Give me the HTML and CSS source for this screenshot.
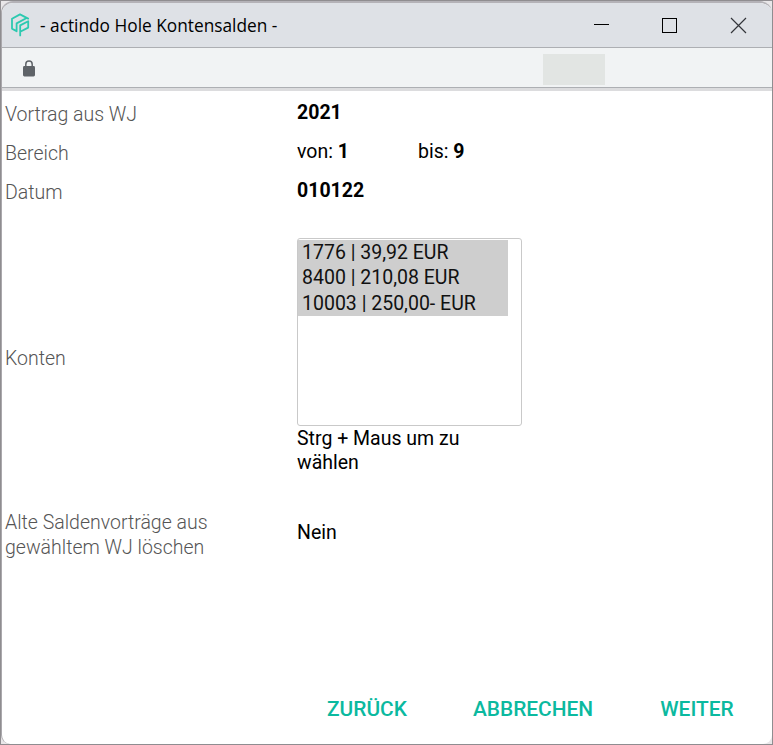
FILE: index.html
```html
<!DOCTYPE html>
<html lang="de">
<head>
<meta charset="utf-8">
<title>- actindo Hole Kontensalden -</title>
<link rel="stylesheet" href="styles.css">
</head>
<body>
<div class="frame">
  <div class="window">
    <header class="titlebar">
      <svg class="logo" width="20" height="24" viewBox="0 0 20 24" fill="none" stroke="#2cc9b0" stroke-width="1.8" stroke-linejoin="round" stroke-linecap="round">
        <path d="M18.2 5.6 L10 1.4 L2 5.8 V15.6 L6.6 18.2 V10.4 L16.2 5.2"/>
        <path d="M10.2 22.4 V12.4 L18.2 8.2 V14.6 L10.2 18.8"/>
      </svg>
      <span class="title">- actindo Hole Kontensalden -</span>
      <svg class="controls" width="155" height="18" viewBox="0 0 155 18" fill="none" stroke="#000">
        <path d="M0 8.5H15"/>
        <rect x="68.5" y="2.5" width="14" height="14"/>
        <path stroke="#33353a" stroke-width="1.2" d="M137 2L152 17M152 2L137 17"/>
      </svg>
    </header>
    <div class="addressbar">
      <svg class="lock" width="12" height="17" viewBox="0 0 12 17">
        <path d="M2.8 7V4.3a3.2 3.2 0 0 1 6.4 0V7" fill="none" stroke="#5f6368" stroke-width="1.5"/>
        <rect y="6" width="12" height="10.4" rx="1.4" fill="#5f6368"/>
      </svg>
      <span class="placeholder"></span>
    </div>
    <main class="content">
      <div class="row"><span class="label">Vortrag aus WJ</span><b class="value">2021</b></div>
      <div class="row"><span class="label">Bereich</span><div class="value range"><span>von: <b>1</b></span><span>bis: <b>9</b></span></div></div>
      <div class="row"><span class="label">Datum</span><b class="value">010122</b></div>
      <div class="row accounts">
        <span class="label">Konten</span>
        <div class="picker">
          <ul class="list">
            <li>1776 | 39,92 EUR</li>
            <li>8400 | 210,08 EUR</li>
            <li>10003 | 250,00- EUR</li>
          </ul>
          <p class="hint">Strg + Maus um zu<br>wählen</p>
        </div>
      </div>
      <div class="row delete"><span class="label">Alte Saldenvorträge aus<br>gewähltem WJ löschen</span><span class="value">Nein</span></div>
      <footer class="actions">
        <button class="back">ZURÜCK</button>
        <button class="cancel">ABBRECHEN</button>
        <button class="next">WEITER</button>
      </footer>
    </main>
  </div>
</div>
</body>
</html>
```
FILE: styles.css
```css
* { box-sizing: border-box; }
body { margin: 0; font-family: Roboto, sans-serif; font-size: 19.5px; color: #000; }
.frame { width: 773px; height: 745px; border: 1px solid #8f8d90; background: #e9e7e9; overflow: hidden; }
.window { height: 743px; border-top: 2px solid #b4b2b7; border-left: 1px solid #aaa8ac; border-radius: 12px 12px 9px 9px; background: #fff; overflow: hidden; display: flex; flex-direction: column; }
.titlebar { height: 45px; flex: none; background: #dee1e6; border-bottom: 1px solid #adafb3; display: flex; align-items: flex-start; padding: 10px 23px 0 8px; }
.logo { flex: none; }
.title { margin-left: 10px; font: 17.3px/26px "Open Sans", sans-serif; color: #000; white-space: nowrap; }
.controls { margin: 3px 0 0 auto; flex: none; }
.addressbar { height: 43px; flex: none; background: #f1f3f4; border-bottom: 3px solid #dcdcde; box-shadow: inset 0 -1px #adafb3; display: flex; align-items: flex-start; padding-left: 21px; }
.lock { margin-top: 12px; }
.placeholder { width: 62px; height: 31px; margin: 6px 0 0 508px; background: #e2e5e3; }
.content { flex: 1; display: flex; flex-direction: column; padding: 4px 0 0 3px; }
.row { display: grid; grid-template-columns: 292px 1fr; height: 39px; align-items: center; }
.label { font-weight: 300; color: #555; line-height: 25px; }
.value { margin-top: -3px; line-height: 24px; }
b { font-weight: 700; color: #000; }
.range { display: grid; grid-template-columns: 121px 1fr; }
.accounts { height: 264px; margin-top: 14px; }
.picker { align-self: start; padding-top: 12px; }
.list { width: 225px; height: 188px; margin: 0; padding: 1px 13px 0 0; border: 1px solid #c9c9c9; border-radius: 3px; list-style: none; color: #111; }
.list li { height: 25.4px; line-height: 25.4px; padding-left: 4px; background: #cecece; }
.hint { margin: 1px 0 0; line-height: 24px; }
.delete { height: 50px; margin-top: 18px; }
.delete .label { margin-top: 2px; }
.actions { display: flex; margin: auto 0 22px; padding-left: 322px; }
.actions button { border: 0; padding: 0; background: none; font: 500 20.9px/26px Roboto, sans-serif; color: #0bb99f; }
.actions .cancel { margin-left: 66px; }
.actions .next { margin-left: 67px; }
```
